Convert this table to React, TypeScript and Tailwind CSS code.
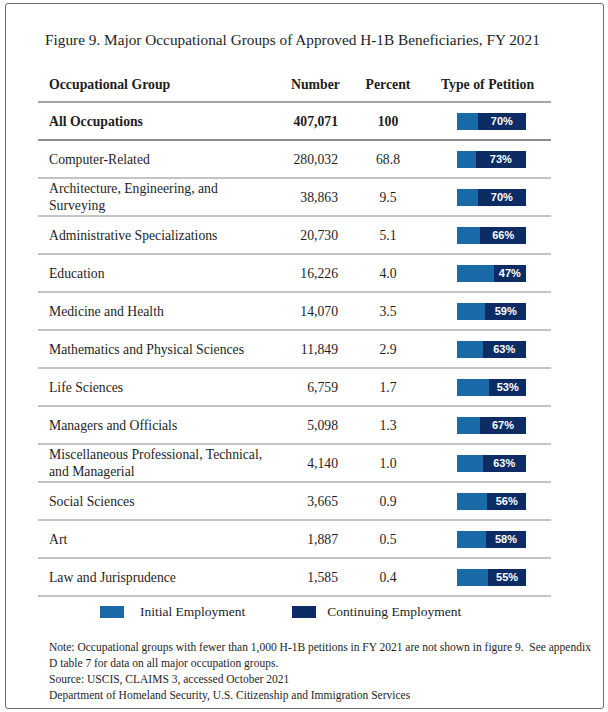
const rows: { name: string[]; num: string; pct: string; cont: number; bold?: boolean }[] = [
  { name: ["All Occupations"], num: "407,071", pct: "100", cont: 70, bold: true },
  { name: ["Computer-Related"], num: "280,032", pct: "68.8", cont: 73 },
  { name: ["Architecture, Engineering, and", "Surveying"], num: "38,863", pct: "9.5", cont: 70 },
  { name: ["Administrative Specializations"], num: "20,730", pct: "5.1", cont: 66 },
  { name: ["Education"], num: "16,226", pct: "4.0", cont: 47 },
  { name: ["Medicine and Health"], num: "14,070", pct: "3.5", cont: 59 },
  { name: ["Mathematics and Physical Sciences"], num: "11,849", pct: "2.9", cont: 63 },
  { name: ["Life Sciences"], num: "6,759", pct: "1.7", cont: 53 },
  { name: ["Managers and Officials"], num: "5,098", pct: "1.3", cont: 67 },
  { name: ["Miscellaneous Professional, Technical,", "and Managerial"], num: "4,140", pct: "1.0", cont: 63 },
  { name: ["Social Sciences"], num: "3,665", pct: "0.9", cont: 56 },
  { name: ["Art"], num: "1,887", pct: "0.5", cont: 58 },
  { name: ["Law and Jurisprudence"], num: "1,585", pct: "0.4", cont: 55 },
];

function PetitionBar({ cont }: { cont: number }) {
  return (
    <div className="flex h-[17px] w-[69px] bg-[#1a6aa8]">
      <div className="flex-1" />
      <div
        className="flex items-center justify-center bg-[#0d2c64] text-[11px] font-bold leading-none text-white [font-family:'Liberation_Sans',Arial,sans-serif]"
        style={{ width: `${(cont / 100) * 69}px` }}
      >
        {cont}%
      </div>
    </div>
  );
}

export default function App() {
  return (
    <div className="min-h-[712px] bg-white pl-[5px] pt-[3px] text-[#1e1e1e] [font-family:'Liberation_Serif','Times_New_Roman',serif]">
      <div className="h-[706px] w-[599px] rounded-[3px] border border-[#6b6b6b]">
        <h1 className="pl-[39px] pt-[26px] text-[15.3px] font-normal leading-[20px]">
          Figure 9. Major Occupational Groups of Approved H-1B Beneficiaries, FY 2021
        </h1>

        <div className="ml-[32px] mt-[20px] w-[513px]">
          <div className="flex h-[33px] items-center border-b-2 border-[#a3a3a3] text-[13.8px] font-bold">
            <div className="w-[240px] pl-[11px]">Occupational Group</div>
            <div className="w-[62px] text-right">Number</div>
            <div className="w-[96px] text-center">Percent</div>
            <div className="w-[103px] text-center">Type of Petition</div>
          </div>

          {rows.map((r, i) => (
            <div
              key={r.name[0]}
              className={`flex h-[38px] items-center border-b-2 text-[13.7px] leading-[17px] ${
                i === 0 ? "border-[#8e8e8e] font-bold" : "border-[#c4c4c4]"
              }`}
            >
              <div className="w-[242px] pl-[11px]">
                {r.name.map((n) => (
                  <div key={n}>{n}</div>
                ))}
              </div>
              <div className="w-[58px] text-right">{r.num}</div>
              <div className="w-[100px] text-center">{r.pct}</div>
              <div className="flex w-[107px] justify-center">
                <PetitionBar cont={r.cont} />
              </div>
            </div>
          ))}

          <div className="flex h-[30px] items-center text-[13.5px]">
            <div className="ml-[62px] h-[12px] w-[24px] bg-[#1a6aa8]" />
            <span className="ml-[16px]">Initial Employment</span>
            <div className="ml-[47px] h-[12px] w-[24px] bg-[#0d2c64]" />
            <span className="ml-[11px]">Continuing Employment</span>
          </div>
        </div>

        <div className="ml-[43px] mt-[12px] text-[11.5px] leading-[16px]">
          <p>
            Note: Occupational groups with fewer than 1,000 H-1B petitions in FY 2021 are not shown in figure 9.&nbsp; See appendix
          </p>
          <p>D table 7 for data on all major occupation groups.</p>
          <p>Source: USCIS, CLAIMS 3, accessed October 2021</p>
          <p>Department of Homeland Security, U.S. Citizenship and Immigration Services</p>
        </div>
      </div>
    </div>
  );
}
